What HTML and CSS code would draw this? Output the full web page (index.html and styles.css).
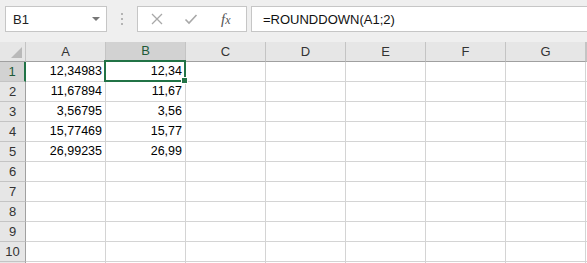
FILE: index.html
```html
<!DOCTYPE html>
<html lang="en">
<head>
    <meta charset="UTF-8">
    <title>ROUNDDOWN</title>
    <link rel="stylesheet" href="styles.css">
</head>
<body>
    <div class="toolbar">
        <div class="name-box">
            <span>B1</span>
            <span class="caret"></span>
        </div>
        <div class="grip"><i></i><i></i><i></i></div>
        <div class="fx-buttons">
            <svg class="btn" width="14" height="14" viewBox="0 0 14 14">
                <path d="M2 2 L12 12 M12 2 L2 12" stroke="#a8a8a8" stroke-width="1.3" fill="none"/>
            </svg>
            <svg class="btn" width="14" height="14" viewBox="0 0 14 14">
                <path d="M1.5 7.5 L5 11 L12.5 3" stroke="#a8a8a8" stroke-width="1.6" fill="none"/>
            </svg>
            <span class="fx">f<span class="x">x</span></span>
        </div>
        <div class="formula">=ROUNDDOWN(A1;2)</div>
    </div>

    <div class="sheet">
        <div class="row head">
            <div class="corner"><span class="tri"></span></div>
            <div class="col">A</div>
            <div class="col active">B</div>
            <div class="col">C</div>
            <div class="col">D</div>
            <div class="col">E</div>
            <div class="col">F</div>
            <div class="col">G</div>
            <div class="col"></div>
        </div>
        <div class="row">
            <div class="rh active">1</div>
            <div class="cell">12,34983</div>
            <div class="cell selected">12,34<span class="handle"></span></div>
            <div class="cell"></div><div class="cell"></div><div class="cell"></div>
            <div class="cell"></div><div class="cell"></div><div class="cell"></div>
        </div>
        <div class="row">
            <div class="rh">2</div>
            <div class="cell">11,67894</div>
            <div class="cell">11,67</div>
            <div class="cell"></div><div class="cell"></div><div class="cell"></div>
            <div class="cell"></div><div class="cell"></div><div class="cell"></div>
        </div>
        <div class="row">
            <div class="rh">3</div>
            <div class="cell">3,56795</div>
            <div class="cell">3,56</div>
            <div class="cell"></div><div class="cell"></div><div class="cell"></div>
            <div class="cell"></div><div class="cell"></div><div class="cell"></div>
        </div>
        <div class="row">
            <div class="rh">4</div>
            <div class="cell">15,77469</div>
            <div class="cell">15,77</div>
            <div class="cell"></div><div class="cell"></div><div class="cell"></div>
            <div class="cell"></div><div class="cell"></div><div class="cell"></div>
        </div>
        <div class="row">
            <div class="rh">5</div>
            <div class="cell">26,99235</div>
            <div class="cell">26,99</div>
            <div class="cell"></div><div class="cell"></div><div class="cell"></div>
            <div class="cell"></div><div class="cell"></div><div class="cell"></div>
        </div>
        <div class="row">
            <div class="rh">6</div>
            <div class="cell"></div><div class="cell"></div><div class="cell"></div><div class="cell"></div>
            <div class="cell"></div><div class="cell"></div><div class="cell"></div><div class="cell"></div>
        </div>
        <div class="row">
            <div class="rh">7</div>
            <div class="cell"></div><div class="cell"></div><div class="cell"></div><div class="cell"></div>
            <div class="cell"></div><div class="cell"></div><div class="cell"></div><div class="cell"></div>
        </div>
        <div class="row">
            <div class="rh">8</div>
            <div class="cell"></div><div class="cell"></div><div class="cell"></div><div class="cell"></div>
            <div class="cell"></div><div class="cell"></div><div class="cell"></div><div class="cell"></div>
        </div>
        <div class="row">
            <div class="rh">9</div>
            <div class="cell"></div><div class="cell"></div><div class="cell"></div><div class="cell"></div>
            <div class="cell"></div><div class="cell"></div><div class="cell"></div><div class="cell"></div>
        </div>
        <div class="row">
            <div class="rh">10</div>
            <div class="cell"></div><div class="cell"></div><div class="cell"></div><div class="cell"></div>
            <div class="cell"></div><div class="cell"></div><div class="cell"></div><div class="cell"></div>
        </div>
        <div class="row">
            <div class="rh"></div>
            <div class="cell"></div><div class="cell"></div><div class="cell"></div><div class="cell"></div>
            <div class="cell"></div><div class="cell"></div><div class="cell"></div><div class="cell"></div>
        </div>
    </div>
</body>
</html>
```

FILE: styles.css
```css
body {
    margin: 0;
    width: 587px;
    height: 263px;
    overflow: hidden;
    background-color: #fff;
    font-family: "Liberation Sans", Arial, sans-serif;
    color: #000;
}

.toolbar {
    height: 42px;
    box-sizing: border-box;
    padding: 6px 0 0 5px;
    background-color: #efefef;
    display: flex;
    align-items: flex-start;
    overflow: hidden;
}

.name-box {
    width: 102px;
    height: 26px;
    box-sizing: border-box;
    border: 1px solid #c6c6c6;
    background-color: #fff;
    display: flex;
    align-items: center;
    justify-content: space-between;
    padding: 0 6px 0 7px;
    font-size: 13px;
    color: #222;
}

.caret {
    width: 0;
    height: 0;
    border-left: 4px solid transparent;
    border-right: 4px solid transparent;
    border-top: 4px solid #777;
}

.grip {
    width: 30px;
    height: 26px;
    display: flex;
    flex-direction: column;
    align-items: center;
    justify-content: center;
    gap: 3px;
}

.grip i {
    width: 2px;
    height: 2px;
    background-color: #b4b4b4;
}

.fx-buttons {
    width: 110px;
    height: 26px;
    box-sizing: border-box;
    border: 1px solid #c6c6c6;
    background-color: #fff;
    display: flex;
    align-items: center;
    padding-left: 12px;
    gap: 20px;
}

.fx {
    font-family: "Liberation Serif", "Times New Roman", serif;
    font-style: italic;
    font-size: 15px;
    color: #555;
    margin-left: 3px;
}

.fx .x {
    font-size: 12px;
}

.formula {
    flex: 1;
    height: 26px;
    margin-left: 4px;
    margin-right: -2px;
    box-sizing: border-box;
    border: 1px solid #c6c6c6;
    background-color: #fff;
    display: flex;
    align-items: center;
    padding-left: 11px;
    font-size: 13px;
    color: #111;
}

.sheet {
    width: 587px;
    height: 221px;
    overflow: hidden;
}

.row {
    display: grid;
    grid-template-columns: 26px repeat(7, 80px) 1fr;
    height: 20px;
}

.row > div {
    box-sizing: border-box;
    border-right: 1px solid #d4d4d4;
    border-bottom: 1px solid #d4d4d4;
}

.head > div {
    background-color: #e6e6e6;
    border-right-color: #c4c4c4;
    border-bottom-color: #a0a0a0;
    font-size: 13px;
    color: #333;
    text-align: center;
    line-height: 19px;
}

.head .corner {
    position: relative;
}

.tri {
    position: absolute;
    right: 3px;
    bottom: 3px;
    width: 0;
    height: 0;
    border-left: 11px solid transparent;
    border-bottom: 11px solid #b9b9b9;
}

.head .col.active {
    background-color: #d2d2d2;
    border-bottom: 2px solid #217346;
    color: #1e5a38;
    line-height: 18px;
}

.row > .rh {
    background-color: #e6e6e6;
    border-right-color: #a0a0a0;
    border-bottom-color: #c4c4c4;
    font-size: 13px;
    color: #333;
    text-align: center;
    line-height: 19px;
}

.row > .rh.active {
    background-color: #d2d2d2;
    border-right: 2px solid #217346;
    color: #1e5a38;
}

.cell {
    font-size: 12.5px;
    text-align: right;
    padding-right: 3px;
    line-height: 19px;
}

.row > .cell.selected {
    position: relative;
}

.selected::after {
    content: "";
    position: absolute;
    left: -2px;
    top: -2px;
    right: -1px;
    bottom: -1px;
    border: 2px solid #217346;
}

.handle {
    position: absolute;
    right: -3px;
    bottom: -3px;
    width: 5px;
    height: 5px;
    background-color: #217346;
    border: 1px solid #fff;
    z-index: 1;
}
```
